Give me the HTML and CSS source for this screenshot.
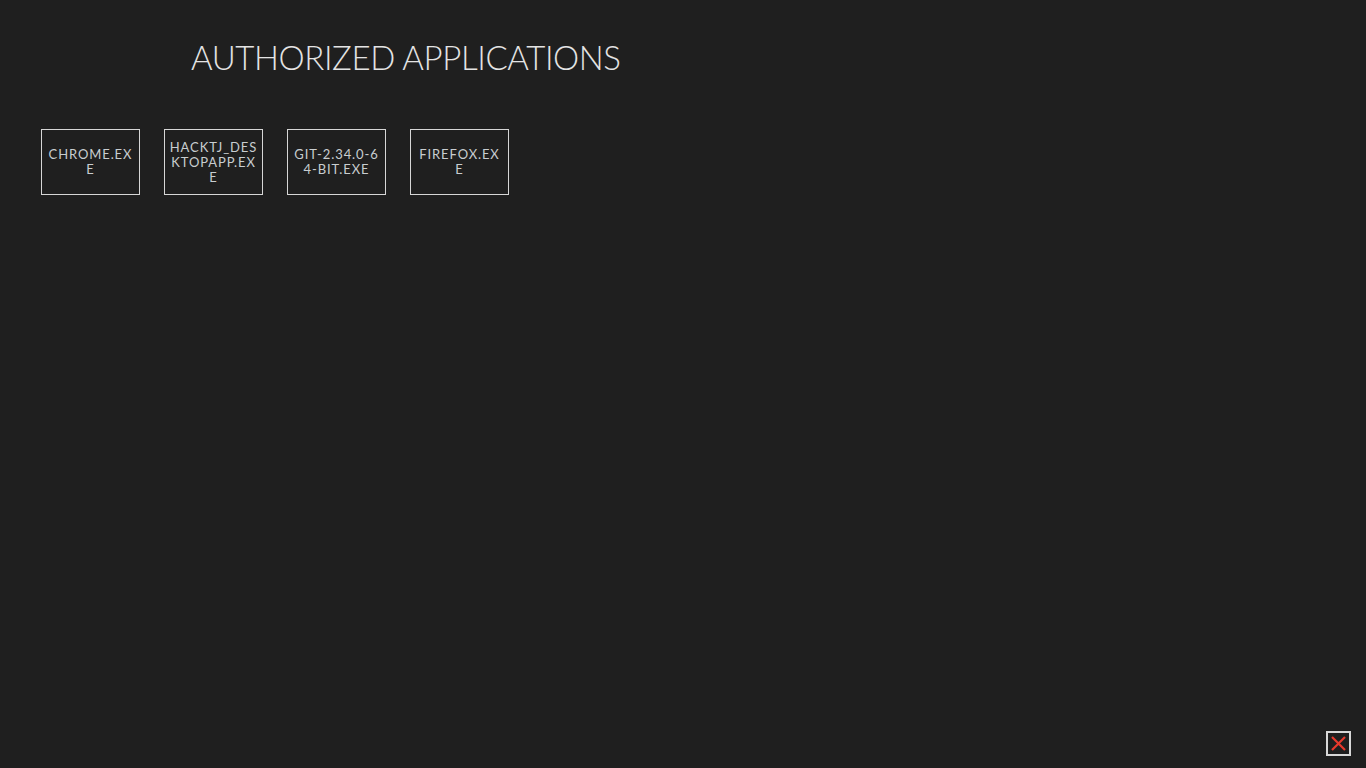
FILE: index.html
```html
<!DOCTYPE html>
<html>
<head>
<meta charset="utf-8">
<link rel="stylesheet" href="styles.css">
</head>
<body>
<main class="page">
  <h1 class="title">AUTHORIZED APPLICATIONS</h1>
  <div class="apps">
    <div class="app"><span>CHROME.EXE</span></div>
    <div class="app"><span>HACKTJ_DESKTOPAPP.EXE</span></div>
    <div class="app"><span>GIT-2.34.0-64-BIT.EXE</span></div>
    <div class="app"><span>FIREFOX.EXE</span></div>
  </div>
</main>
<button class="close" aria-label="Close">
  <svg width="17" height="17" viewBox="0 0 17 17"><path d="M2 2L15 15M15 2L2 15" stroke="#e8392c" stroke-width="2.2" fill="none"/></svg>
</button>
</body>
</html>
```
FILE: styles.css
```css
html, body {
  margin: 0;
  height: 100%;
  background: #1f1f1f;
  font-family: "Lato", "Noto Sans", sans-serif;
  color: #d8d8d8;
}
.page {
  padding: 38px 0 0 41px;
}
.title {
  margin: 0 0 0 150px;
  font-weight: 300;
  font-size: 33px;
  line-height: 38px;
  letter-spacing: -0.4px;
  color: #e4e4e4;
}
.apps {
  display: flex;
  gap: 24px;
  margin-top: 53px;
}
.app {
  box-sizing: border-box;
  width: 99px;
  height: 66px;
  border: 1px solid #d6d6d6;
  display: flex;
  align-items: center;
  justify-content: center;
  padding: 0 4.5px;
  text-align: center;
  font-size: 13px;
  line-height: 15px;
  letter-spacing: 0.9px;
  color: #c8cdd0;
  word-break: break-all;
}
.app span { display: block; width: 100%; }
.close {
  position: fixed;
  right: 15px;
  bottom: 12px;
  width: 25px;
  height: 25px;
  box-sizing: border-box;
  border: 2px solid #d8d8d8;
  background: #1f1f1f;
  padding: 0;
  display: flex;
  align-items: center;
  justify-content: center;
  cursor: pointer;
}
.close svg { display: block; }
```
